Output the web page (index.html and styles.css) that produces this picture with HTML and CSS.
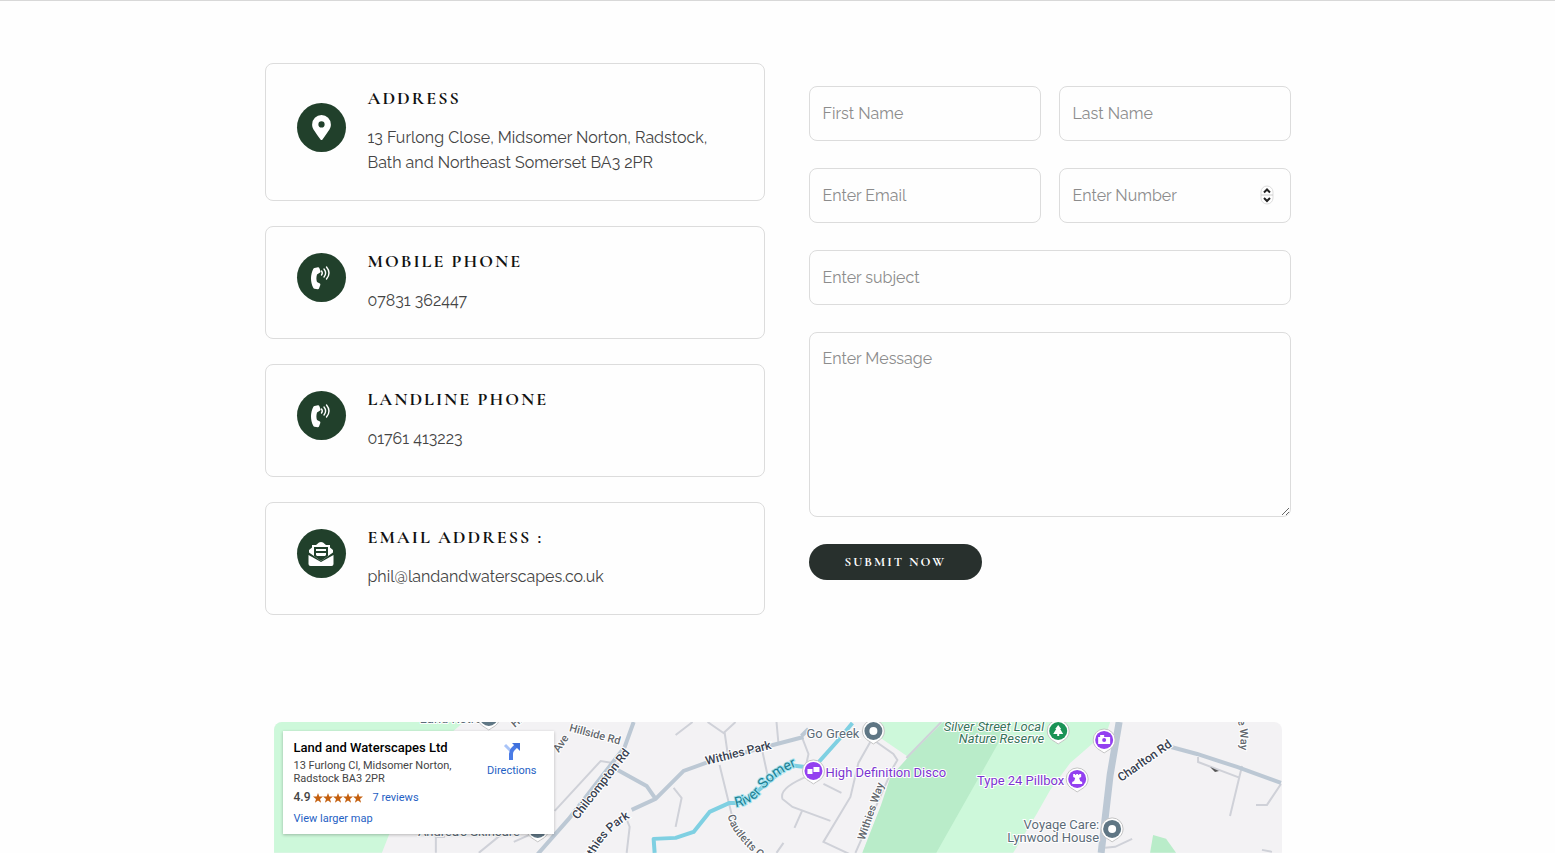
FILE: index.html
```html
<!DOCTYPE html>
<html lang="en">
<head>
    <meta charset="UTF-8">
    <meta name="viewport" content="width=device-width, initial-scale=1.0">
    <title>Contact - Land and Waterscapes</title>
    <link rel="stylesheet" href="styles.css">
</head>
<body>
    <main>
        <section class="contact">
            <div class="cards">
                <div class="card">
                    <span class="icon">
                        <svg viewBox="0 0 384 512" width="19" height="25"><path fill="#fff" d="M172 502C27 291 0 270 0 192a192 192 0 0 1 384 0c0 78-27 99-172 310a24 24 0 0 1-40 0zM192 256a64 64 0 1 0 0-128 64 64 0 0 0 0 128z"/></svg>
                    </span>
                    <div class="info">
                        <h3>ADDRESS</h3>
                        <p>13 Furlong Close, Midsomer Norton, Radstock, Bath and Northeast Somerset BA3 2PR</p>
                    </div>
                </div>
                <div class="card">
                    <span class="icon">
                        <svg viewBox="0 0 24 26" width="24" height="26"><path fill="#fff" d="M5.500 3 9 2.200c.6-.1 1.100.2 1.300.7l1.200 3.300c.2.500 0 1-.4 1.400L8 9.500c-.8 2.700-.8 5 0 7.500l2.900 1.500c.4.300.6.900.4 1.400L10 23.400c-.2.500-.7.900-1.300.8L5.500 23.700c-.5-.1-.9-.4-1.100-.8-3.200-6-3.200-13.200 0-19.200.2-.4.700-.6 1.100-.7z"/><path fill="none" stroke="#fff" stroke-width="1.400" stroke-linecap="round" d="M12.500 6q1.600 2 0 4M15 4q3.200 4 0 8M17.500 2q5 6 0 12"/></svg>
                    </span>
                    <div class="info">
                        <h3>MOBILE PHONE</h3>
                        <p>07831 362447</p>
                    </div>
                </div>
                <div class="card">
                    <span class="icon">
                        <svg viewBox="0 0 24 26" width="24" height="26"><path fill="#fff" d="M5.500 3 9 2.200c.6-.1 1.100.2 1.300.7l1.200 3.300c.2.500 0 1-.4 1.400L8 9.500c-.8 2.700-.8 5 0 7.500l2.900 1.500c.4.300.6.900.4 1.400L10 23.400c-.2.500-.7.900-1.300.8L5.500 23.700c-.5-.1-.9-.4-1.100-.8-3.200-6-3.200-13.200 0-19.200.2-.4.700-.6 1.100-.7z"/><path fill="none" stroke="#fff" stroke-width="1.400" stroke-linecap="round" d="M12.500 6q1.600 2 0 4M15 4q3.200 4 0 8M17.500 2q5 6 0 12"/></svg>
                    </span>
                    <div class="info">
                        <h3>LANDLINE PHONE</h3>
                        <p>01761 413223</p>
                    </div>
                </div>
                <div class="card">
                    <span class="icon">
                        <svg viewBox="0 0 26 26" width="26" height="26"><path fill="#fff" d="M4 4h4l3-2.500q2-1 4 0L18 4h4v2.500l3 2.400v2.600L13 20 1 11.500V8.900l3-2.400z"/><path fill="#21402b" d="M6 6h14v9l-7 5-7-5z"/><path fill="#fff" d="M8 8h10v2H8zM8 12h10v2l-1 1H9l-1-1z"/><path fill="#fff" d="M.5 14 13 21l12.500-7v9q0 2-2 2h-21q-2 0-2-2z"/></svg>
                    </span>
                    <div class="info">
                        <h3>EMAIL ADDRESS :</h3>
                        <p>phil@landandwaterscapes.co.uk</p>
                    </div>
                </div>
            </div>
            <form class="form">
                <input type="text" placeholder="First Name" aria-label="First Name">
                <input type="text" placeholder="Last Name" aria-label="Last Name">
                <input type="email" placeholder="Enter Email" aria-label="Enter Email">
                <div class="number">
                    <input type="number" placeholder="Enter Number" aria-label="Enter Number">
                    <svg class="stepper" viewBox="0 0 14 20" width="14" height="20"><rect x="1" y="1" width="12" height="18" rx="6" fill="#fff" stroke="#ddd"/><path stroke="#ccc" d="M1 10h12"/><path fill="none" stroke="#222" stroke-width="2" d="M4 7.500l3-3 3 3M4 13l3 3 3-3"/></svg>
                </div>
                <input class="full" type="text" placeholder="Enter subject" aria-label="Enter subject">
                <textarea class="full" placeholder="Enter Message" aria-label="Enter Message"></textarea>
                <button type="submit">SUBMIT NOW</button>
            </form>
        </section>
        <section class="map">
            <svg class="mapa" viewBox="0 0 1009 131">
                <rect width="1009" height="131" fill="#f3f2f4"/>
                <!-- parks -->
                <g class="park">
                    <path d="M0 0h190l-14 12-61 101-7 18H0z"/>
                    <path d="M603 0h234l-4 12-13 9-23 20-20 27-13 23-24 40H589l18-46 28-50-35-24z"/>
                    <path class="dark" d="M670 0h67l-74 131h-74l18-46 10-30 18-20z"/>
                    <path class="dark" d="M877 131l3-18 13 4 10 14z"/>
                </g>
                <!-- small streets -->
                <g class="street">
                    <path d="M281 89l46-50 18 3M402 13l17-13M434 0l16 11 12-11M451 10l3 21M446 43l12 49 6 13M503 0l2 22M489 30l5 23M400 66l8 10-6 29M352 95l4 10-3 26M162 131v-16h9M205 131l22-18M240 120l18-8"/>
                    <path d="M528 14l7 18-3 14M535 54q-30 12-26 23l10 8 38 14M529 88l-8 18M503 131l7-10M598 18l-13 23-8 34-27 45 30 14M603 20l17 12 4 6-4 7-38 86M550 62l18 9"/>
                    <path d="M925 35v5l42 16M969 44l-12 50M1008 62l-14 21h-11M832 126l10-1 17-8M989 128l10 2M668 0l-35 36"/>
                </g>
                <g class="road">
                    <path d="M360 0l-9 25-56 72-44 50M344 48l29 16 9 13M358 88l24-11 28-28 25-9 95-25M528 14l7-7"/>
                    <path class="big" d="M846 0l-9 53-9 78"/>
                    <path d="M898 25l26 7 40 13 44 16"/>
                </g>
                <path class="river" d="M381 131l-1-14 22-1 18-6 16-20 20-9h14l45-38 25 3 25-28 14-17"/>
                <!-- street names -->
                <path id="withies" fill="none" d="M315 147q11-36 47-54"/>
                <path id="cautletts" fill="none" d="M454 94q5 24 48 54"/>
                <path id="river" fill="none" d="M462 85q17-2 28-17t34-24"/>
                <path id="way" fill="none" d="M955-14q18 14 10 54"/>
                <g class="road-name">
                    <text transform="translate(304 98) rotate(-52)">Chilcompton Rd</text>
                    <text transform="translate(433 43) rotate(-14)">Withies Park</text>
                    <text><textPath href="#withies">Withies Park</textPath></text>
                    <text transform="translate(848 60) rotate(-35)">Charlton Rd</text>
                </g>
                <g class="street-name">
                    <text transform="translate(295 9) rotate(15)">Hillside Rd</text>
                    <text transform="translate(285 31) rotate(-56)">Ave</text>
                    <text transform="translate(241 6) rotate(-40)">Hi</text>
                    <text transform="translate(591 119) rotate(-71)">Withies Way</text>
                    <text><textPath href="#cautletts">Cautletts C</textPath></text>
                    <text><textPath href="#way">Gale Way</textPath></text>
                </g>
                <text class="river-name"><textPath href="#river">River Somer</textPath></text>
                <!-- places -->
                <g class="place">
                    <text x="586" y="16" text-anchor="end">Go Greek</text>
                    <text x="826" y="107" text-anchor="end">Voyage Care:</text>
                    <text x="826" y="120" text-anchor="end">Lynwood House</text>
                    <text x="146" y="1">Land Retro</text>
                    <text x="144" y="114">Andrea's Skincare</text>
                    <g class="purple">
                        <text x="552" y="55">High Definition Disco</text>
                        <text x="791" y="63" text-anchor="end">Type 24 Pillbox</text>
                    </g>
                    <g class="green">
                        <text x="771" y="9" text-anchor="end">Silver Street Local</text>
                        <text x="771" y="21" text-anchor="end">Nature Reserve</text>
                    </g>
                </g>
                <!-- pins -->
                <g class="pin grey" transform="translate(600 9)"><path d="M-11 0a11 11 0 1 1 22 0q0 7-8 11l-3 2-3-2q-8-4-8-11z"/><circle r="9"/><circle class="dot" r="4"/></g>
                <g class="pin grey" transform="translate(839 107)"><path d="M-11 0a11 11 0 1 1 22 0q0 7-8 11l-3 2-3-2q-8-4-8-11z"/><circle r="9"/><circle class="dot" r="4"/></g>
                <g class="pin grey" transform="translate(215 -5)"><path d="M-11 0a11 11 0 1 1 22 0q0 7-8 11l-3 2-3-2q-8-4-8-11z"/><circle r="9"/></g>
                <g class="pin grey" transform="translate(264 107)"><path d="M-11 0a11 11 0 1 1 22 0q0 7-8 11l-3 2-3-2q-8-4-8-11z"/><circle r="9"/></g>
                <g class="pin violet" transform="translate(540 49)"><path d="M-11 0a11 11 0 1 1 22 0q0 7-8 11l-3 2-3-2q-8-4-8-11z"/><circle r="9"/><path class="dot" d="M-6-2h5v5h-5zM0-4h6v5H0z"/></g>
                <g class="pin violet" transform="translate(831 18)"><path d="M-11 0a11 11 0 1 1 22 0q0 7-8 11l-3 2-3-2q-8-4-8-11z"/><circle r="9"/><path class="dot" d="M-6-3h2v-2h4v2h6v7H-6z"/><circle r="2"/></g>
                <g class="pin violet" transform="translate(804 57)"><path d="M-11 0a11 11 0 1 1 22 0q0 7-8 11l-3 2-3-2q-8-4-8-11z"/><circle r="9"/><path class="dot" d="M-4-5h2v1h1v-1h2v1h1v-1h2v3l-2 1 1 3 2 1v2H-5V3l2-1 1-3-2-1z"/></g>
                <g class="pin tree" transform="translate(785 9)"><path d="M-11 0a11 11 0 1 1 22 0q0 7-8 11l-3 2-3-2q-8-4-8-11z"/><circle r="9"/><path class="dot" d="M0-6l3 4-1 0 3 5H1v2h-2V3h-4l3-5-1 0z"/></g>
                <path fill="#555" d="M937 45l9 4-4 1z"/>
            </svg>
            <div class="place-card">
                <div class="place-info">
                    <h4>Land and Waterscapes Ltd</h4>
                    <p>13 Furlong Cl, Midsomer Norton, Radstock BA3 2PR</p>
                    <div class="rating">
                        <span>4.9</span>
                        <svg viewBox="0 0 50 10" width="50" height="10"><path fill="#c5600f" d="M5 0l1.300 3.500H10L7 5.900 8.100 9.700 5 7.500 1.900 9.700 3 5.900 0 3.500h3.700zM15 0l1.300 3.500H20l-3 2.400 1.100 3.800L15 7.500l-3.100 2.200L13 5.900l-3-2.400h3.700zM25 0l1.300 3.500H30l-3 2.400 1.100 3.800L25 7.500l-3.100 2.200L23 5.900l-3-2.400h3.700zM35 0l1.300 3.500H40l-3 2.400 1.100 3.800L35 7.500l-3.100 2.200L33 5.900l-3-2.400h3.700zM45 0l1.300 3.500H50l-3 2.400 1.100 3.800L45 7.500l-3.100 2.200L43 5.900l-3-2.400h3.700z"/></svg>
                        <a href="#">7 reviews</a>
                    </div>
                    <a href="#">View larger map</a>
                </div>
                <a class="directions" href="#">
                    <svg viewBox="0 0 18 18" width="18" height="18"><path fill="none" stroke="#a9c4f8" stroke-width="3" d="M2 3l6 6"/><path fill="none" stroke="#4a7be6" stroke-width="4" d="M8 18v-6q0-3 2-5l3-3"/><path fill="#3f70dc" d="M9 1h8v8z"/></svg>
                    Directions
                </a>
            </div>
        </section>
    </main>
</body>
</html>
```
FILE: styles.css
```css
* {
    box-sizing: border-box;
}
body {
    margin: 0;
    background-color: #fefefe;
    border-top: 1px solid #d8d8d8;
    font-family: Raleway, Lato, sans-serif;
    color: #444;
}
main {
    max-width: 1026px;
    margin: 0 auto;
    padding-top: 62px;
}
h3, h4, p {
    margin: 0;
}
.contact {
    display: grid;
    grid-template-columns: 500fr 482fr;
    gap: 44px;
}
.cards {
    display: flex;
    flex-direction: column;
    gap: 25px;
}
.card {
    display: flex;
    align-items: center;
    gap: 22px;
    padding: 15px 31px 25px;
    border: 1px solid #dcdcdc;
    border-radius: 8px;
}
.icon {
    flex: none;
    width: 49px;
    height: 49px;
    display: flex;
    align-items: center;
    justify-content: center;
    border-radius: 50%;
    background-color: #21402b;
}
.info h3 {
    margin-bottom: 8px;
    font-family: "Cormorant Garamond", "Liberation Serif", serif;
    font-size: 18px;
    line-height: 38px;
    letter-spacing: 2px;
    color: #111;
}
.info p {
    font-size: 16px;
    line-height: 25px;
}
.form {
    display: grid;
    grid-template-columns: 1fr 1fr;
    gap: 27px 18px;
    align-content: start;
    padding-top: 23px;
}
.form input, .form textarea {
    width: 100%;
    height: 55px;
    padding: 0 13px;
    border: 1px solid #dcdcdc;
    border-radius: 8px;
    background-color: #fefefe;
    font-family: inherit;
    font-size: 16px;
    color: #444;
}
.form textarea {
    display: block;
    height: 185px;
    padding-top: 13px;
    line-height: 25px;
}
.form ::placeholder {
    color: #8c8c8c;
}
.full {
    grid-column: 1 / 3;
}
.number {
    position: relative;
}
.stepper {
    position: absolute;
    right: 17px;
    top: 17px;
}
.number input {
    appearance: textfield;
}
.form button {
    justify-self: start;
    height: 36px;
    padding: 0 36px;
    border: none;
    border-radius: 18px;
    background-color: #28302d;
    font-family: "Cormorant Garamond", "Liberation Serif", serif;
    font-size: 13px;
    font-weight: bold;
    letter-spacing: 2px;
    color: #fff;
}
.map {
    position: relative;
    margin: 107px 9px 0;
    overflow: hidden;
    border-radius: 8px 8px 0 0;
    font-family: Roboto, sans-serif;
}
.mapa {
    display: block;
    width: 100%;
}
.park {
    fill: #cdf8da;
}
.park .dark {
    fill: #b9ecc9;
}
.street {
    fill: none;
    stroke: #cfd1d8;
    stroke-width: 2;
}
.road {
    fill: none;
    stroke: #bcc8d4;
    stroke-width: 4;
}
.road .big {
    stroke-width: 7;
}
.river {
    fill: none;
    stroke: #7fd0e2;
    stroke-width: 4;
    stroke-linejoin: round;
}
.mapa text {
    stroke: #fff;
    stroke-width: 2px;
    paint-order: stroke;
}
.road-name {
    font-size: 12px;
    font-weight: 500;
    fill: #37404f;
}
.street-name {
    font-size: 11px;
    font-weight: 500;
    fill: #62666c;
}
.river-name {
    font-size: 14px;
    fill: #1b7f93;
}
.mapa .river-name {
    stroke: #a5e3ef;
}
.place {
    font-size: 13px;
    fill: #5c6b78;
}
.purple {
    fill: #7b35d0;
}
.green {
    fill: #37745a;
    font-style: italic;
}
.pin path {
    fill: #fff;
    stroke: #c4c4c4;
}
.pin .dot {
    fill: #fff;
    stroke: none;
}
.grey circle {
    fill: #5f7684;
}
.violet circle {
    fill: #9340f0;
}
.tree circle {
    fill: #1a9356;
}
.place-card {
    position: absolute;
    left: 9px;
    top: 9px;
    width: 271px;
    display: flex;
    justify-content: space-between;
    padding: 8px 17px 9px 11px;
    background-color: #fff;
    box-shadow: 0 1px 3px rgb(0, 0, 0, 0.25);
    font-size: 11px;
    line-height: 13px;
}
.place-card a {
    color: #1f5fc4;
    text-decoration: none;
}
.place-info {
    width: 168px;
}
.place-card h4 {
    margin-bottom: 3px;
    font-size: 13px;
    font-weight: 500;
    line-height: 17px;
    white-space: nowrap;
    color: #000;
}
.rating {
    display: flex;
    align-items: center;
    gap: 3px;
    margin: 4px 0 6px;
    line-height: 17px;
}
.rating span {
    font-size: 12px;
    font-weight: 500;
}
.rating a {
    margin-left: 6px;
}
.directions {
    display: flex;
    flex-direction: column;
    align-items: center;
    gap: 4px;
    padding-top: 3px;
}
```
